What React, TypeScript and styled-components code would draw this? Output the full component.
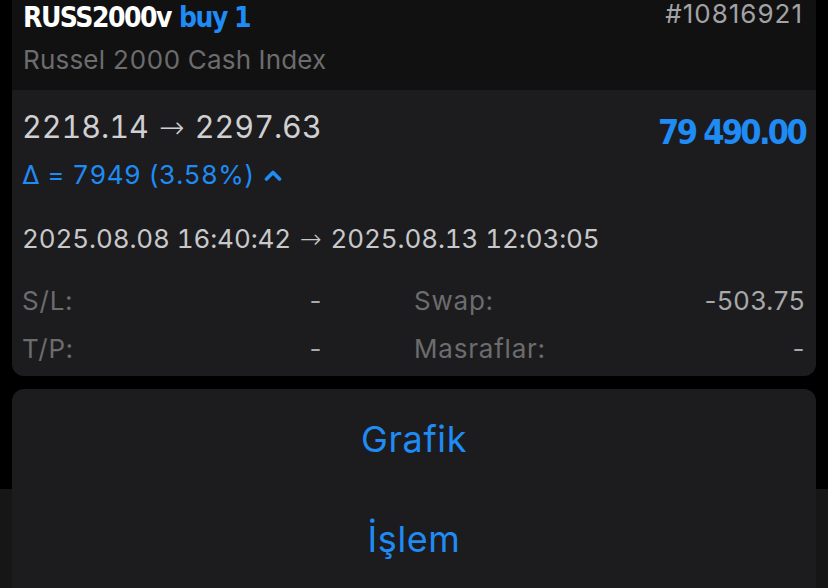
import React from "react";
import styled, { createGlobalStyle } from "styled-components";

const GlobalStyle = createGlobalStyle`
  html, body {
    margin: 0;
    padding: 0;
    background: #000;
  }
  body {
    width: 828px;
    height: 588px;
    overflow: hidden;
    background: linear-gradient(to bottom, #000 0, #000 489px, #1a1a1a 489px, #161617 490px, #161617 100%);
    font-family: Inter, "Liberation Sans", sans-serif;
    font-feature-settings: "tnum";
    -webkit-font-smoothing: antialiased;
  }
`;

const BLUE = "#1f8bf5";
const NARROW = `"DejaVu Sans Condensed", "Liberation Sans", sans-serif`;

const Page = styled.div`
  display: flex;
  flex-direction: column;
  gap: 13px;
  padding: 0 12px;
`;

const DealCard = styled.section`
  background: #1c1c1e;
  border-radius: 0 0 12px 12px;
  overflow: hidden;
`;

const Header = styled.header`
  height: 90px;
  box-sizing: border-box;
  background: #111112;
  padding: 0 13px 0 11px;
  display: grid;
  grid-template-columns: 1fr auto;
  grid-template-rows: 36px auto;
`;

const Title = styled.div`
  font-family: ${NARROW};
  font-weight: 700;
  font-size: 28px;
  line-height: 36px;
  letter-spacing: -1.5px;
  color: #ffffff;
  white-space: nowrap;
`;

const Accent = styled.span`
  color: ${BLUE};
  margin-left: 8px;
`;

const Ticket = styled.div`
  font-size: 26px;
  line-height: 30px;
  letter-spacing: 1px;
  font-feature-settings: normal;
  color: #a3a3a5;
  text-align: right;
  margin-top: -1px;
`;

const Subtitle = styled.div`
  grid-column: 1 / span 2;
  margin-top: 4px;
  font-size: 26px;
  line-height: 40px;
  letter-spacing: 0.2px;
  color: #6c6c6e;
`;

const Body = styled.div`
  padding: 17px 11px 10px 10px;
  display: flex;
  flex-direction: column;
`;

const PriceRow = styled.div`
  display: flex;
  justify-content: space-between;
  align-items: flex-start;
`;

const Prices = styled.div`
  font-size: 30.5px;
  line-height: 40px;
  letter-spacing: 0;
  color: #d0d0d2;
`;

const Arrow = styled.span`
  font-family: "DejaVu Sans", "Liberation Sans", sans-serif;
  font-weight: 300;
  margin: 0 2px;
`;

const Profit = styled.div`
  font-family: ${NARROW};
  font-weight: 700;
  font-size: 34px;
  line-height: 40px;
  letter-spacing: -2.7px;
  color: ${BLUE};
  margin-top: 5px;
`;

const Delta = styled.div`
  display: flex;
  align-items: center;
  gap: 9px;
  margin-top: 6px;
  font-size: 26px;
  line-height: 34px;
  letter-spacing: 0.4px;
  color: ${BLUE};
`;

const DateLine = styled.div`
  margin-top: 30px;
  font-size: 26px;
  line-height: 34px;
  letter-spacing: -0.1px;
  color: #c8c8ca;
`;

const Stats = styled.div`
  margin-top: 28px;
  display: grid;
  grid-template-columns: 300px 1fr;
  column-gap: 92px;
  row-gap: 14px;
`;

const Stat = styled.div`
  display: flex;
  justify-content: space-between;
  font-size: 26px;
  line-height: 34px;
  letter-spacing: 0.8px;
`;

const Label = styled.span`
  color: #6c6c6e;
`;

const Value = styled.span`
  color: #a8a8aa;
  font-feature-settings: normal;
  letter-spacing: 0.5px;
`;

const ActionCard = styled.nav`
  background: #1c1c1e;
  border-radius: 12px;
  display: flex;
  flex-direction: column;
  height: 220px;
`;

const Action = styled.button`
  all: unset;
  height: 100px;
  display: flex;
  align-items: center;
  justify-content: center;
  font-family: Inter, "Liberation Sans", sans-serif;
  font-size: 36px;
  letter-spacing: 0.6px;
  color: ${BLUE};
`;

const Chevron = () => (
  <svg width="18" height="12" viewBox="0 0 18 12" fill="none">
    <path d="M2.5 10 L9 3.5 L15.5 10" stroke={BLUE} strokeWidth="3.6" strokeLinecap="round" strokeLinejoin="round" />
  </svg>
);

export default function App() {
  return (
    <>
      <GlobalStyle />
      <Page>
        <DealCard>
          <Header>
            <Title>
              RUSS2000v<Accent>buy 1</Accent>
            </Title>
            <Ticket>#10816921</Ticket>
            <Subtitle>Russel 2000 Cash Index</Subtitle>
          </Header>
          <Body>
            <PriceRow>
              <Prices>
                2218.14 <Arrow>→</Arrow> 2297.63
              </Prices>
              <Profit>79 490.00</Profit>
            </PriceRow>
            <Delta>
              <span>Δ = 7949 (3.58%)</span>
              <Chevron />
            </Delta>
            <DateLine>
              2025.08.08 16:40:42 <Arrow>→</Arrow> 2025.08.13 12:03:05
            </DateLine>
            <Stats>
              <Stat>
                <Label>S/L:</Label>
                <Value>-</Value>
              </Stat>
              <Stat>
                <Label>Swap:</Label>
                <Value>-503.75</Value>
              </Stat>
              <Stat>
                <Label>T/P:</Label>
                <Value>-</Value>
              </Stat>
              <Stat>
                <Label>Masraflar:</Label>
                <Value>-</Value>
              </Stat>
            </Stats>
          </Body>
        </DealCard>
        <ActionCard>
          <Action>Grafik</Action>
          <Action>İşlem</Action>
        </ActionCard>
      </Page>
    </>
  );
}
